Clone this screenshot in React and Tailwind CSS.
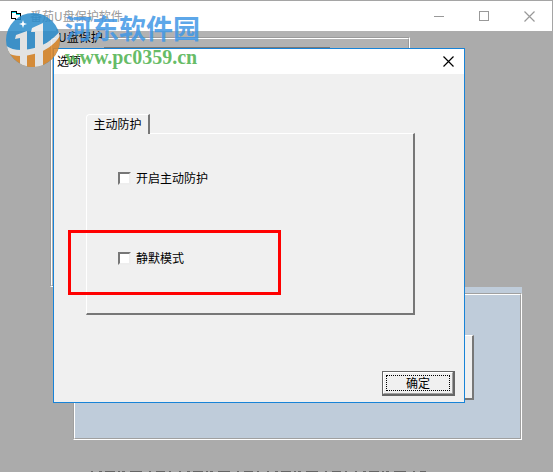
const MinusIcon = () => (
  <svg className="w-[11px] h-[11px]" viewBox="0 0 11 11" fill="none" stroke="currentColor" shapeRendering="crispEdges">
    <path d="M0 5.5h10" />
  </svg>
);

const SquareIcon = () => (
  <svg className="w-[11px] h-[11px]" viewBox="0 0 11 11" fill="none" stroke="currentColor" shapeRendering="crispEdges">
    <path d="M.5 .5h9v9h-9z" />
  </svg>
);

const CloseIcon = () => (
  <svg className="w-[11px] h-[11px]" viewBox="0 0 11 11" fill="none" stroke="currentColor" strokeWidth="1.2">
    <path d="M0.5 0.5l10 10M10.5 0.5l-10 10" />
  </svg>
);

const AppIcon = () => (
  <svg className="w-3 h-3" viewBox="0 0 12 12" shapeRendering="crispEdges">
    <path d="M1 1h6v2h4v7h-6v-1h-4z" fill="#000" />
    <path d="M2 3h4v5h-4zM6 5h4v4h-4z" fill="#fff" />
    <path d="M2 2h4v1h-4zM6 4h4v1h-4z" fill="#00d8e8" />
  </svg>
);

const SiteLogo = () => (
  <svg className="w-14 h-14 opacity-85" viewBox="0 0 56 56">
    <defs>
      <clipPath id="logo-circle">
        <circle cx="28" cy="28" r="27" />
      </clipPath>
    </defs>
    <g clipPath="url(#logo-circle)">
      <rect width="56" height="56" fill="#2a8ccc" />
      <path d="M0 36c8 7 18 8 29 5 13-4 21-11 27-20v38H0z" fill="#dc8626" />
      <path d="M10 27l1-4 11-4v36h-7V26zM26 20l1-4 11-5v44h-8V20z" fill="#ececec" />
      <path d="M22 40h8v17h-8z" fill="#dc8626" />
      <path d="M0 33c6 5 15 6 25 4 12-2 23-9 30-18v5c-6 9-14 15-26 18-11 3-22 3-29-3z" fill="#ececec" />
    </g>
    <path d="M18 8l1 3 3 1-3 1-1 3-1-3-3-1 3-1z" fill="#fff" />
  </svg>
);

const CheckRow = ({ id, label }) => (
  <div className="flex items-center gap-[5px]">
    <input
      id={id}
      type="checkbox"
      className="appearance-none w-[13px] h-[13px] bg-white border-2 border-t-[#777] border-l-[#777] border-r-[#eee] border-b-[#eee] checked:bg-gray-600"
    />
    <label htmlFor={id}>{label}</label>
  </div>
);

const App = () => {
  return (
    <div className="relative min-h-screen overflow-hidden bg-[#ababab] text-xs leading-4 text-black font-['Noto_Sans_CJK_SC',sans-serif]">
      {/* main window */}
      <header className="h-[31px] bg-white border-t border-r border-[#a5a5a5] flex items-center pl-[10px] pr-[17px] text-[#999]">
        <AppIcon />
        <h1 className="ml-2 flex-1">番茄U盘保护软件</h1>
        <div className="flex items-center gap-[34px]">
          <button aria-label="最小化"><MinusIcon /></button>
          <button aria-label="最大化"><SquareIcon /></button>
          <button aria-label="关闭"><CloseIcon /></button>
        </div>
      </header>

      <main className="pb-8">
        <section className="ml-[50px] mr-[143px] h-64 bg-[#b2b2b2] pt-[6px]">
          <div className="h-full border border-[#9a9a9a] border-r-white border-b-white">
            <div className="h-full border border-white border-r-[#9a9a9a] border-b-[#9a9a9a] px-1">
              <h2 className="-mt-[10px] w-fit bg-[#b2b2b2] px-[2px]">U盘保护</h2>
              <div className="mt-[2px] ml-12 mr-[74px] border-t border-[#777]" />
            </div>
          </div>
        </section>
        <section className="ml-[73px] mr-[31px] h-[153px] bg-[#bfccda] pt-[6px]">
          <div className="h-full border border-[#a0a0a0] border-r-white border-b-white">
            <div className="h-full border border-white border-r-[#a0a0a0] border-b-[#a0a0a0] flex justify-end pt-10 pr-[46px]">
              <button aria-label="打开" className="w-24 h-[65px] bg-[#f0f0f0] border-t border-t-white border-r-2 border-b-2 border-[#777]" />
            </div>
          </div>
        </section>
      </main>

      {/* top edge of the status line */}
      <svg className="absolute bottom-0 left-[91px] w-[335px] h-px" viewBox="0 0 335 1" preserveAspectRatio="none">
        <path d="M0 .5h335" stroke="#666" strokeDasharray="2 6 3 3 10 3 2 2 3 5 12 7 2 5 9 4 2 8" />
      </svg>

      {/* options dialog */}
      <div role="dialog" aria-labelledby="dialog-title" className="absolute top-12 left-[53px] right-[88px] bg-[#f0f0f0] border border-[#1883d7]">
        <div className="h-[25px] bg-white flex items-center justify-between pl-[3px] pr-[10px]">
          <h2 id="dialog-title" className="pb-[2px]">选项</h2>
          <button aria-label="关闭"><CloseIcon /></button>
        </div>
        <div className="pt-10 pl-8 pr-[49px]">
          <div role="tablist" className="flex">
            <button role="tab" aria-selected="true" className="relative z-10 -mb-px h-5 w-16 rounded-tl-sm bg-[#f0f0f0] border-t border-l border-white border-r-2 border-r-[#777] pb-[2px]">
              主动防护
            </button>
          </div>
          <div role="tabpanel" className="h-[182px] border border-white border-r-2 border-b-2 border-r-[#777] border-b-[#777] pl-[31px] pt-9 flex flex-col gap-16">
            <CheckRow id="guard" label="开启主动防护" />
            <CheckRow id="silent" label="静默模式" />
          </div>
        </div>
        <div className="flex justify-end pt-14 pb-[6px] pr-[9px]">
          <button className="w-[73px] h-[25px] border border-[#666] border-r-2 border-b-2 bg-[#f0f0f0]">
            <span className="flex h-full items-center justify-center border border-white border-r-[#a0a0a0] border-b-[#a0a0a0] p-[2px]">
              <span className="flex h-full w-full items-center justify-center border border-dotted border-black">确定</span>
            </span>
          </button>
        </div>
        {/* highlight over the silent mode row */}
        <div className="pointer-events-none absolute top-[181px] left-[14px] w-[213px] h-[65px] border-3 border-[#ff0000]" />
      </div>

      {/* site watermark */}
      <div className="pointer-events-none absolute top-3 left-[5px] flex gap-1">
        <SiteLogo />
        <div className="font-bold">
          <p className="text-[27px] leading-8 text-[#3f97e6]/85">河东软件园</p>
          <p className="font-['Liberation_Serif',serif] text-xl leading-[26px] text-[#4cb04c]/85">www.pc0359.cn</p>
        </div>
      </div>
    </div>
  );
};

export default App;
